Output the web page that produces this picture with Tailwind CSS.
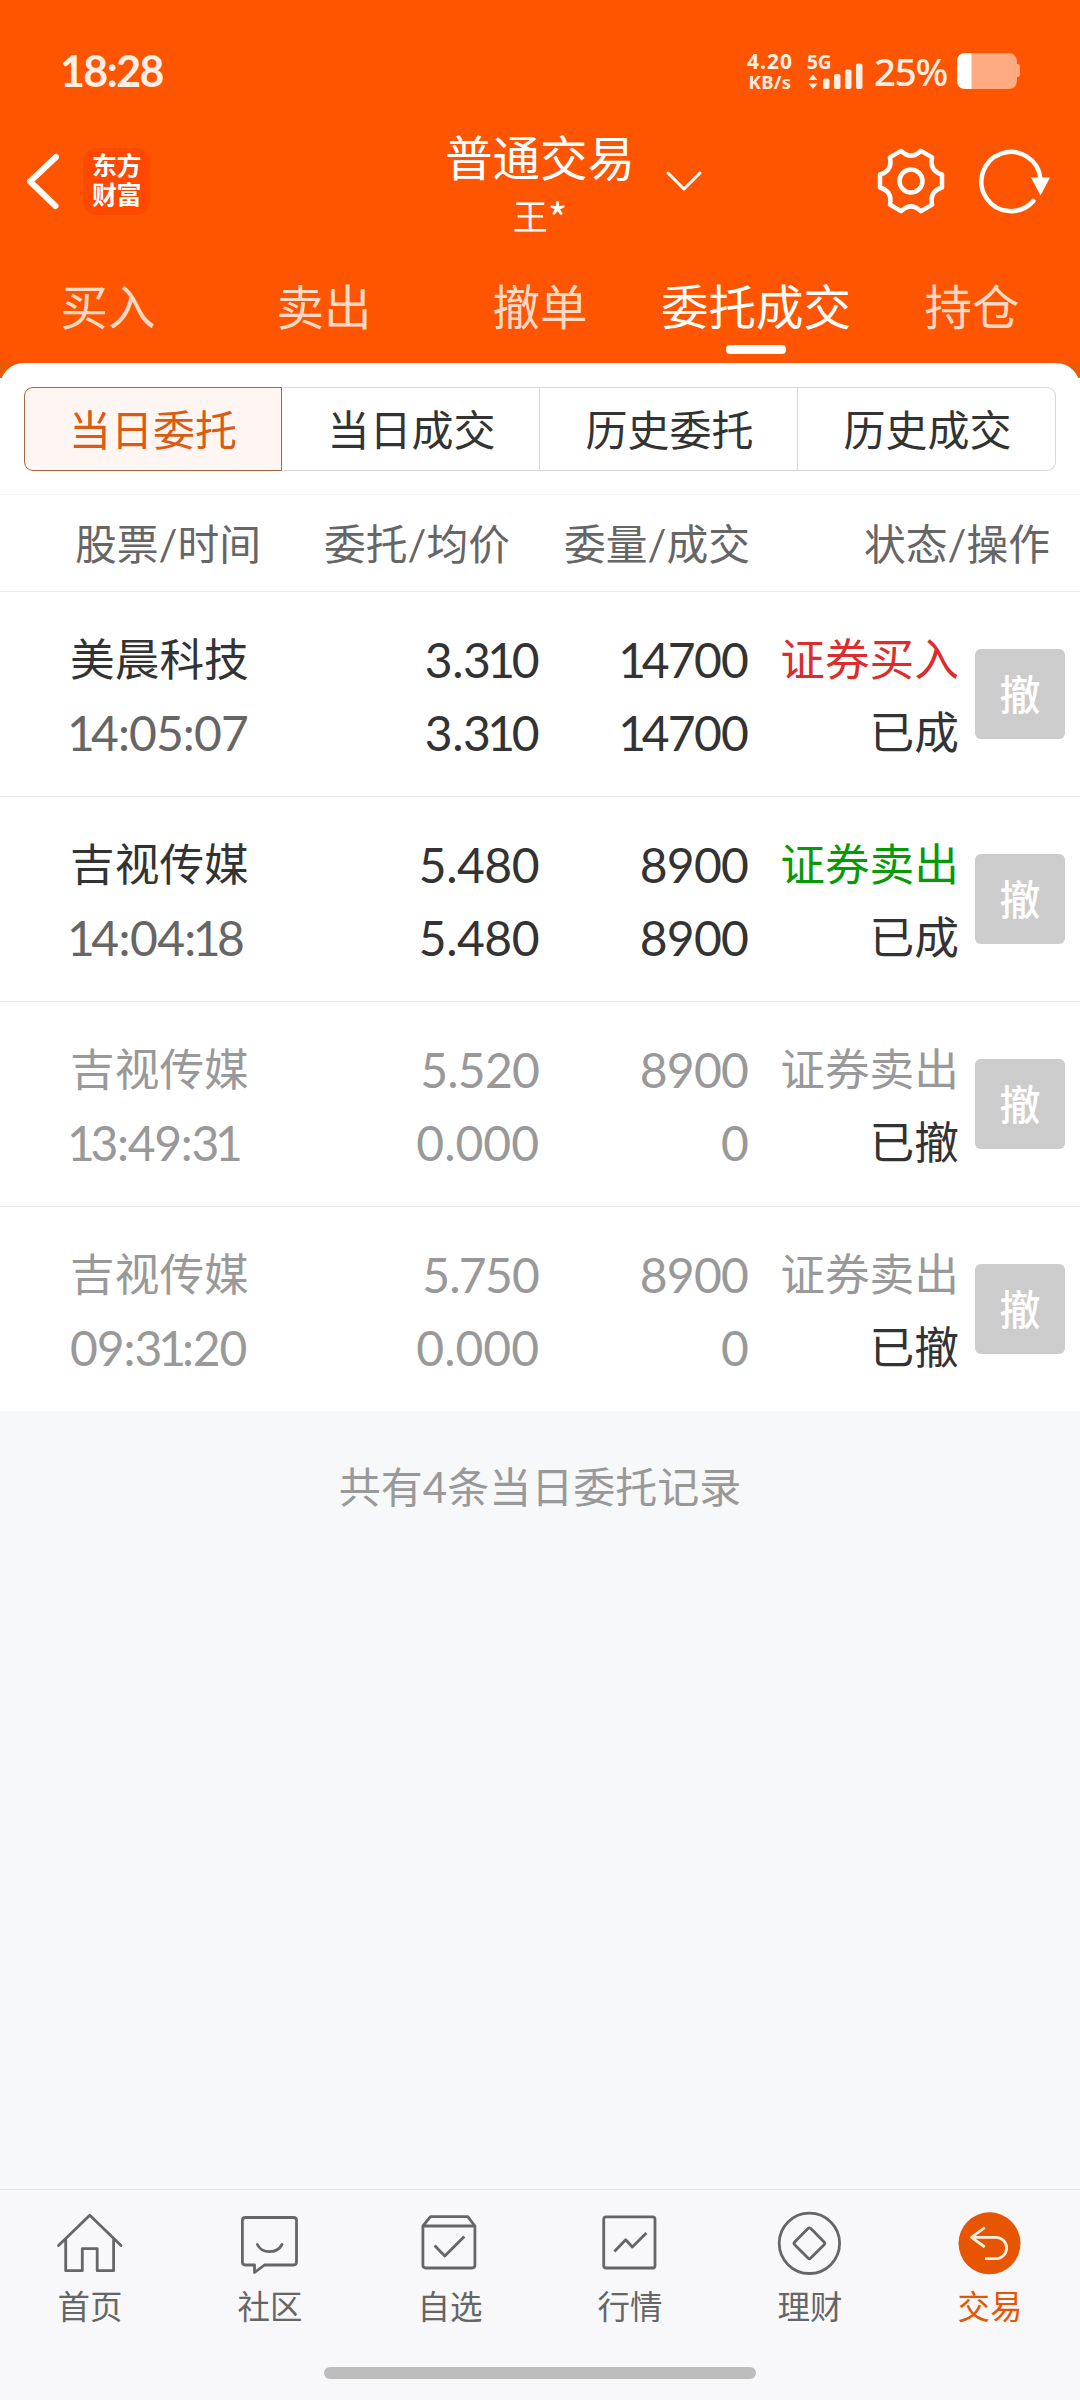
<!DOCTYPE html>
<html lang="zh-CN">
<head>
<meta charset="utf-8">
<title>普通交易</title>
<script src="https://cdn.jsdelivr.net/npm/@tailwindcss/browser@4"></script>
</head>
<body class="w-[1080px] h-[2400px] overflow-hidden bg-[#f7f8fa] flex flex-col font-[Lato,'Noto_Sans_CJK_SC',sans-serif] text-[#333]">

<header class="bg-[#ff5500] text-white h-[363px] shrink-0 flex flex-col">
  <!-- status bar -->
  <div class="h-[108px] pt-[35px] pl-[60px] pr-[60px] flex justify-between items-start text-[#ffeee4]">
    <div class="text-[43px] leading-[72px] font-bold tracking-[-1.6px]">18:28</div>
    <div class="flex h-[72px] items-center font-['Noto_Sans',sans-serif]">
      <div class="w-[50px] mr-[11px] flex flex-col items-center font-bold">
        <span class="text-[21px] leading-[21px] tracking-[1px]">4.20</span>
        <span class="text-[18.5px] leading-[20px] tracking-[0.3px]">KB/s</span>
      </div>
      <div class="w-[61px] mr-[7px] flex flex-col">
        <span class="text-[19px] leading-[20px] font-bold pl-[1px]">5G</span>
        <svg class="w-[62px] h-[28px] -mt-[10px]" viewBox="-2 12 62 28" fill="#ffeee4">
          <path d="M5 24.500l4.500 5.500h-9zM5 39l4.500-5.500h-9z"/>
          <rect x="15" y="28.500" width="6.500" height="10.500" rx="2"/><rect x="26" y="24" width="6.500" height="15" rx="2"/><rect x="37" y="19.500" width="6.500" height="19.500" rx="2"/><rect x="48" y="13.500" width="6.500" height="25.500" rx="2"/>
        </svg>
      </div>
      <div class="text-[38.5px] leading-[72px] font-medium w-[76px] tracking-[-1.3px] whitespace-nowrap">25%</div>
      <svg class="w-[63px] h-[36px] ml-[7px]" viewBox="0 0 63 36">
        <path d="M9 0H51Q60 0 60 9V11H61Q63 11 63 14V21Q63 24 61 24H60V27Q60 36 51 36H9Q0 36 0 27V9Q0 0 9 0Z" fill="#ffaa80"/>
        <path d="M9 0H14.500V36H9Q0 36 0 27V9Q0 0 9 0Z" fill="#fff"/>
      </svg>
    </div>
  </div>
  <!-- title bar -->
  <div class="h-[146px] flex items-center pl-[24px] pr-[29px] justify-between">
    <div class="flex items-center gap-[21px] w-[338px]">
      <svg class="w-[38px] h-[60px]" viewBox="0 0 38 60" fill="none" stroke="#fff" stroke-width="6" stroke-linecap="round" stroke-linejoin="round"><path d="M32 6L6 30.500L31.500 55"/></svg>
      <div class="w-[67px] h-[67px] rounded-[14px] bg-[#ff4800] flex flex-col items-center justify-center font-bold text-[25px] leading-[29px] tracking-[-0.5px] pb-[2px]"><span>东方</span><span>财富</span></div>
    </div>
    <div class="flex items-center">
      <div class="w-[190px] mt-[8px] flex flex-col items-center">
        <span class="text-[47.5px] leading-[60px]">普通交易</span>
        <span class="text-[35px] leading-[54px] font-['Noto_Sans_CJK_SC',sans-serif]">王<span class="text-[42px] leading-[40px] align-[-5px]">*</span></span>
      </div>
      <svg class="w-[40px] h-[24px] ml-[29px]" viewBox="0 0 40 24" fill="none" stroke="#fff" stroke-width="3" stroke-linecap="round" stroke-linejoin="round"><path d="M4 4L20 20L36 4"/></svg>
    </div>
    <div class="flex items-center justify-end gap-[28px] w-[264px]">
      <svg class="w-[72px] h-[72px]" viewBox="-36 -36 72 72" fill="none" stroke="#fff" stroke-width="4.500" stroke-linejoin="round">
        <path d="M31 -6.500V6.500Q18.200 10.500 21.100 23.600L9.900 30.100Q0 20.500 -9.900 30.100L-21.100 23.600Q-18.200 10.500 -31 6.500V-6.500Q-18.200 -10.500 -21.100 -23.600L-9.900 -30.100Q0 -20.500 9.900 -30.100L21.100 -23.600Q18.200 -10.500 31 -6.500Z"/>
        <circle r="11.500"/>
      </svg>
      <svg class="w-[76px] h-[72px]" viewBox="-36 -36 76 72" fill="none"><path d="M29.500 -2A29.600 29.600 0 1 0 22.300 20" stroke="#fff" stroke-width="4.500" stroke-linecap="round"/><path d="M20 -3.500H39L29.500 14.500Z" fill="#fff"/></svg>
    </div>
  </div>
  <!-- trade tabs -->
  <nav class="grid grid-cols-5 h-[109px] text-[47.500px] leading-[106px] text-center text-[#ffd9c4]">
    <span>买入</span><span>卖出</span><span>撤单</span>
    <span class="text-white relative">委托成交<i class="absolute left-[78px] top-[91px] w-[60px] h-[9px] rounded-[4px] bg-white"></i></span>
    <span>持仓</span>
  </nav>
</header>

<main class="grow">
  <div class="bg-linear-to-b from-[#e85a06] from-[15px] to-white to-[15px]">
  <section class="bg-white rounded-t-[24px] h-[132px] px-[24px] pt-[24px] border-b border-[#f5f5f5]">
    <div class="grid grid-cols-4 h-[84px] text-[42px] leading-[84px] text-center">
      <div class="h-[84px] border border-[#a8683f] bg-[#fff6f3] text-[#dc5a12] rounded-l-[9px]">当日委托</div>
      <div class="h-[84px] border border-l-0 border-[#d6d8d9] pl-[2px]">当日成交</div>
      <div class="h-[84px] border border-l-0 border-[#d6d8d9] pl-[2px]">历史委托</div>
      <div class="h-[84px] border border-l-0 border-[#d6d8d9] pl-[2px] rounded-r-[9px]">历史成交</div>
    </div>
  </section>
  </div>
  <div class="h-[97px] bg-white border-b border-[#ebebeb] pl-[75px] pr-[32px] grid grid-cols-[249px_240px_300px_1fr] text-[41.8px] leading-[98px] text-[#666] whitespace-nowrap">
    <span>股票/时间</span><span>委托/均价</span><span>委量/成交</span><span class="text-right">状态/操作</span>
  </div>

  <div class="bg-white divide-y divide-[#ebebeb] text-[44.7px] leading-[73px]">
    <div class="h-[205px] pl-[70px] pt-[31px] grid grid-cols-[230px_239px_209px_211px_106px]">
      <div><p>美晨科技</p><p class="text-[48px] tracking-[-0.9px] text-[#666]"><span class="-ml-[3px] -mr-[3px]">1</span>4:05:07</p></div>
      <div class="text-right text-[48px] tracking-[-0.5px]"><p>3.3<span class="-mx-[3px]">1</span>0</p><p>3.3<span class="-mx-[3px]">1</span>0</p></div>
      <div class="text-right text-[48px] tracking-[-0.8px]"><p><span class="-mr-[3.5px]">1</span>4<span class="-mx-[1px]">7</span>00</p><p><span class="-mr-[3.5px]">1</span>4<span class="-mx-[1px]">7</span>00</p></div>
      <div class="text-right"><p class="text-[#dd2c2c]">证券买入</p><p>已成</p></div>
      <button class="ml-[16px] mt-[26px] size-[90px] rounded-[6px] bg-[#ccc] text-white text-[41px] leading-[92px] font-medium">撤</button>
    </div>
    <div class="h-[205px] pl-[70px] pt-[31px] grid grid-cols-[230px_239px_209px_211px_106px]">
      <div><p>吉视传媒</p><p class="text-[48px] tracking-[-0.6px] text-[#666]"><span class="-ml-[3px] -mr-[3px]">1</span>4:04:<span class="-mx-[3px]">1</span>8</p></div>
      <div class="text-right text-[48px] tracking-[-0.5px]"><p>5.480</p><p>5.480</p></div>
      <div class="text-right text-[48px] tracking-[-0.8px]"><p>8900</p><p>8900</p></div>
      <div class="text-right"><p class="text-[#079a07]">证券卖出</p><p>已成</p></div>
      <button class="ml-[16px] mt-[26px] size-[90px] rounded-[6px] bg-[#ccc] text-white text-[41px] leading-[92px] font-medium">撤</button>
    </div>
    <div class="h-[205px] pl-[70px] pt-[31px] grid grid-cols-[230px_239px_209px_211px_106px] text-[#999]">
      <div><p>吉视传媒</p><p class="text-[48px] tracking-[-1.3px]"><span class="-ml-[3px] -mr-[3px]">1</span>3:49:3<span class="-mx-[3px]">1</span></p></div>
      <div class="text-right text-[48px] tracking-[-0.8px]"><p>5.520</p><p class="tracking-normal">0.000</p></div>
      <div class="text-right text-[48px] tracking-[-0.8px]"><p>8900</p><p>0</p></div>
      <div class="text-right"><p>证券卖出</p><p class="text-[#333]">已撤</p></div>
      <button class="ml-[16px] mt-[26px] size-[90px] rounded-[6px] bg-[#ccc] text-white text-[41px] leading-[92px] font-medium">撤</button>
    </div>
    <div class="h-[204px] pl-[70px] pt-[31px] grid grid-cols-[230px_239px_209px_211px_106px] text-[#999]">
      <div><p>吉视传媒</p><p class="text-[48px] tracking-[-1.1px]">09:3<span class="-mx-[3px]">1</span>:20</p></div>
      <div class="text-right text-[48px] tracking-[-0.8px]"><p>5.<span class="-mx-[1px]">7</span>50</p><p class="tracking-normal">0.000</p></div>
      <div class="text-right text-[48px] tracking-[-0.8px]"><p>8900</p><p>0</p></div>
      <div class="text-right"><p>证券卖出</p><p class="text-[#333]">已撤</p></div>
      <button class="ml-[16px] mt-[26px] size-[90px] rounded-[6px] bg-[#ccc] text-white text-[41px] leading-[92px] font-medium">撤</button>
    </div>
  </div>
  <p class="mt-[46px] text-center text-[42px] leading-[60px] text-[#999]">共有4条当日委托记录</p>
</main>

<footer class="h-[211px] shrink-0 bg-[#f8f8fa] border-t border-[#e2e3e5]">
  <nav class="grid grid-cols-6 pt-[17px] text-[32.500px] leading-[56px] text-[#666]">
    <div class="flex flex-col items-center">
      <svg class="size-[72px]" viewBox="0 0 72 72" fill="none" stroke="#666" stroke-width="2.800" stroke-linecap="round" stroke-linejoin="round"><path d="M4.500 38.500L35.800 8.300L67 38.500M11.700 32.500V63.700H28.300V41.700H43.200V63.700H59.600V32.500"/></svg>
      <span>首页</span></div>
    <div class="flex flex-col items-center">
      <svg class="size-[72px]" viewBox="0 0 72 72" fill="none" stroke="#666" stroke-width="2.800" stroke-linecap="round" stroke-linejoin="round"><path d="M11.400 10.500H59.500Q62.500 10.500 62.500 13.500V55Q62.500 58 59.500 58H30.500L20.500 65.500V58H11.400Q8.400 58 8.400 55V13.500Q8.400 10.500 11.400 10.500Z"/><path d="M23.300 37.500C28 47 43 47 48 37.500"/></svg>
      <span>社区</span></div>
    <div class="flex flex-col items-center">
      <svg class="size-[72px]" viewBox="0 0 72 72" fill="none" stroke="#666" stroke-width="2.800" stroke-linejoin="round"><path d="M8.900 19H60.900V58Q60.900 61 57.900 61H11.900Q8.900 61 8.900 58ZM8.900 19L16.500 9.700H53.800L60.900 19"/><path d="M20.600 38.500L30.800 49L50.300 29.500"/></svg>
      <span>自选</span></div>
    <div class="flex flex-col items-center">
      <svg class="size-[72px]" viewBox="0 0 72 72" fill="none" stroke="#666" stroke-width="2.800" stroke-linejoin="round"><rect x="9.700" y="9.800" width="51.300" height="51.200" rx="2.500"/><path d="M20.400 44.500L31.700 32.700L38.300 40L52.400 26"/></svg>
      <span>行情</span></div>
    <div class="flex flex-col items-center">
      <svg class="size-[72px]" viewBox="0 0 72 72" fill="none" stroke="#666" stroke-width="2.800" stroke-linejoin="round"><circle cx="35.400" cy="36.300" r="30.200"/><rect x="24" y="24.900" width="22.800" height="22.800" rx="2" transform="rotate(45 35.400 36.300)"/></svg>
      <span>理财</span></div>
    <div class="flex flex-col items-center text-[#e85500]">
      <svg class="size-[72px]" viewBox="0 0 72 72" fill="none"><circle cx="35.500" cy="36.300" r="31" fill="#e85500"/><path d="M30.800 20.500L17.500 30.400L30.800 40M18 30.400H42A10.650 10.650 0 0 1 42 51.700H31" stroke="#ffeee0" stroke-width="2.800" stroke-linejoin="round"/></svg>
      <span>交易</span></div>
  </nav>
  <div class="mx-auto mt-[32px] w-[432px] h-[12px] rounded-full bg-[#bdbdbd]"></div>
</footer>
</body>
</html>
